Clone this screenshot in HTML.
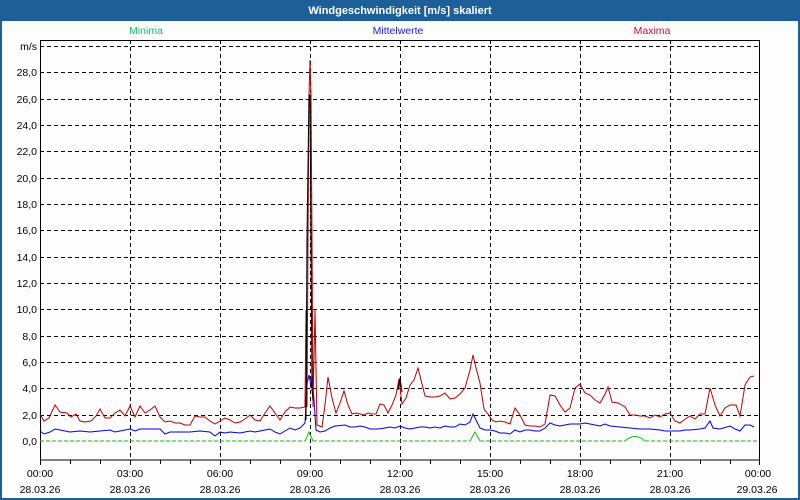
<!DOCTYPE html>
<html><head><meta charset="utf-8"><style>
html,body{margin:0;padding:0;width:800px;height:500px;overflow:hidden;background:#fcfdfc}
svg{display:block}
text{font-family:"Liberation Sans","DejaVu Sans",sans-serif;font-size:10.5px}
</style></head><body>
<svg width="800" height="500" viewBox="0 0 800 500" xmlns="http://www.w3.org/2000/svg">
<rect x="0" y="0" width="800" height="500" fill="#1d5f98"/>
<rect x="2" y="21" width="796" height="477" fill="#fcfdfc"/>
<text x="400" y="14" text-anchor="middle" fill="#fff" font-weight="bold" style="font-size:11px">Windgeschwindigkeit [m/s] skaliert</text>
<text x="146" y="34" text-anchor="middle" fill="#10c060">Minima</text>
<text x="398" y="34" text-anchor="middle" fill="#2020e0">Mittelwerte</text>
<text x="652" y="34" text-anchor="middle" fill="#c01040">Maxima</text>
<g stroke="#000" stroke-width="1" stroke-dasharray="4,3" fill="none">
<path d="M40 46.5H760M40 72.5H760M40 99.5H760M40 125.5H760M40 151.5H760M40 178.5H760M40 204.5H760M40 230.5H760M40 257.5H760M40 283.5H760M40 309.5H760M40 336.5H760M40 362.5H760M40 388.5H760M40 415.5H760"/>
<path d="M130.5 40V460M220.5 40V460M310.5 40V460M400.5 40V460M490.5 40V460M580.5 40V460M670.5 40V460"/>
</g>
<rect x="40.5" y="40.5" width="719" height="419.5" fill="none" stroke="#000"/>
<path d="M70.5 460v4M100.5 460v4M160.5 460v4M190.5 460v4M250.5 460v4M280.5 460v4M340.5 460v4M370.5 460v4M430.5 460v4M460.5 460v4M520.5 460v4M550.5 460v4M610.5 460v4M640.5 460v4M700.5 460v4M730.5 460v4M40.5 460v5M130.5 460v5M220.5 460v5M310.5 460v5M400.5 460v5M490.5 460v5M580.5 460v5M670.5 460v5M759.5 460v5" stroke="#000"/>
<g fill="#000" text-anchor="end">
<text x="37" y="50">m/s</text>
<text x="37" y="76">28,0</text><text x="37" y="103">26,0</text><text x="37" y="129">24,0</text><text x="37" y="155">22,0</text><text x="37" y="182">20,0</text><text x="37" y="208">18,0</text><text x="37" y="234">16,0</text><text x="37" y="261">14,0</text><text x="37" y="287">12,0</text><text x="37" y="313">10,0</text><text x="37" y="340">8,0</text><text x="37" y="366">6,0</text><text x="37" y="392">4,0</text><text x="37" y="419">2,0</text><text x="37" y="445">0,0</text>
</g>
<g fill="#000" text-anchor="middle">
<text x="40" y="477">00:00</text><text x="130" y="477">03:00</text><text x="220" y="477">06:00</text><text x="310" y="477">09:00</text><text x="400" y="477">12:00</text><text x="490" y="477">15:00</text><text x="580" y="477">18:00</text><text x="670" y="477">21:00</text><text x="758" y="477">00:00</text>
<text x="40" y="493">28.03.26</text><text x="130" y="493">28.03.26</text><text x="220" y="493">28.03.26</text><text x="310" y="493">28.03.26</text><text x="400" y="493">28.03.26</text><text x="490" y="493">28.03.26</text><text x="580" y="493">28.03.26</text><text x="670" y="493">28.03.26</text><text x="757" y="493">29.03.26</text>
</g>
<polyline fill="none" stroke="#10c010" stroke-dasharray="4,2" points="40,441 305,441"/>
<polyline fill="none" stroke="#10c010" points="305,441 309,432 313,441"/>
<polyline fill="none" stroke="#10c010" stroke-dasharray="4,2" points="313,441 470,441"/>
<polyline fill="none" stroke="#10c010" points="470,441 475,432 480,441"/>
<polyline fill="none" stroke="#10c010" stroke-dasharray="4,2" points="480,441 625,441"/>
<path d="M625 441Q635 432 645 441" fill="none" stroke="#10c010"/>
<polyline fill="none" stroke="#10c010" stroke-dasharray="4,2" points="645,441 757,441"/>
<polyline fill="none" stroke="#0000e8" points="40,431 44,434 50,432 55,429 60,430 70,432 80,431 90,432 100,431 110,430 115,432 120,431 130,429 135,431 140,429 160,429 165,434 170,432 180,432 190,432 200,431 210,432 215,436 220,432 225,433 230,432 240,433 250,431 255,432 260,431 270,429 275,432 280,434 285,431 290,428 295,430 300,428 305,423 307,384 309,375 310,380 311,388 312,375 314,400 316,430 320,432 325,431 330,428 335,426 345,425 350,427 355,427 360,426 365,427 370,429 378,429 385,428 390,427 395,428 400,426 405,428 410,429 415,428 420,427 425,427 430,428 435,427 440,428 445,426 450,427 455,427 460,424 465,425 470,422 473,414 476,420 480,428 485,430 490,430 495,431 500,433 505,433 510,434 515,430 520,432 525,430 530,430 535,431 540,431 545,428 550,423 555,425 560,426 570,424 580,424 585,423 590,424 600,426 605,424 610,426 620,427 630,428 640,429 650,429 660,430 665,431 670,431 680,431 685,430 690,430 700,429 705,428 710,421 713,428 720,429 730,426 735,429 740,431 745,425 750,425 754,427"/>
<polyline fill="none" stroke="#c00000" points="40,414 44,421 49,418 55,405 60,412 67,413 71,417 76,414 80,421 85,422 91,421 96,416 100,409 105,418 110,418 115,413 120,410 125,416 130,406 135,417 140,406 145,413 150,410 155,406 160,417 165,422 170,421 175,423 180,423 185,425 190,425 195,416 200,417 205,417 210,421 215,424 220,421 225,418 230,420 235,423 240,422 245,419 250,415 255,420 260,421 265,413 270,406 275,413 280,420 285,412 290,407 295,408 300,408 305,407 306,310 307,407 308,240 309,95 310,60 311,95 312,240 313,407 315,310 317,425 322,427 325,405 328,377 332,398 336,413 340,403 344,391 348,405 352,414 356,413 360,414 364,415 368,413 372,414 376,414 380,404 384,405 388,413 392,405 396,395 399,379 402,404 406,398 410,385 414,380 418,368 422,384 425,396 430,397 435,397 440,396 445,393 450,399 455,398 460,394 465,388 470,370 473,355 476,368 480,383 484,409 488,414 492,420 496,422 500,421 505,422 510,424 515,408 520,415 525,425 530,426 535,426 540,427 545,424 550,395 555,396 560,405 565,412 570,408 575,388 580,384 585,393 590,395 595,400 600,403 605,394 608,387 612,402 618,403 625,407 630,415 635,415 640,416 645,416 650,418 655,415 660,417 665,414 670,413 675,421 680,423 684,420 690,416 695,419 700,414 705,414 710,388 715,405 720,416 725,408 730,405 736,405 740,416 745,385 750,377 754,376"/>
<polyline fill="none" stroke="#000" points="306,420 307,237 309,95 310,95 311,238 312,390 313,400"/>
<polyline fill="none" stroke="#000" points="398,390 400,378 402,392"/>
</svg>
</body></html>
